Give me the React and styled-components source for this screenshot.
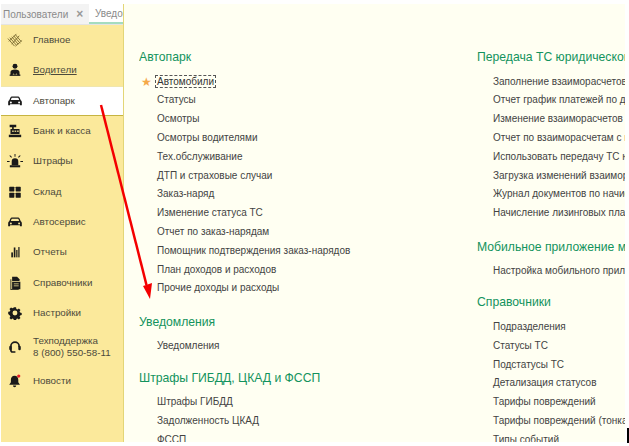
import React from "react";
import styled, { createGlobalStyle } from "styled-components";

const Global = createGlobalStyle`
  html, body { margin: 0; padding: 0; background: #fff; }
  body { font-family: "Liberation Sans", Arial, sans-serif; }
`;

const Page = styled.div`
  position: relative;
  width: 629px;
  height: 446px;
  overflow: hidden;
  background: #fff;
`;
const Frame = styled.div`
  display: flex;
  width: 624px;
  height: 438px;
  margin: 4px 0 0 1px;
  overflow: hidden;
`;
const Left = styled.aside`
  display: flex;
  flex-direction: column;
  box-sizing: border-box;
  flex: 0 0 123px;
  width: 123px;
  min-width: 0;
  overflow: hidden;
  border-right: 1px solid #e3d677;
  background: #fbe99b;
`;
const Tabs = styled.div`
  display: flex;
  box-sizing: border-box;
  height: 21px;
  overflow: hidden;
  background: #fff;
  border-bottom: 1px solid #e4e4e4;
  flex: none;
`;
const Tab = styled.div`
  display: flex;
  align-items: center;
  flex: none;
  box-sizing: border-box;
  font-size: 10px;
  white-space: nowrap;
  color: #8a8a8a;
  background: ${p => (p.$active ? "#fff" : "#f3f3f3")};
  width: ${p => (p.$active ? "40px" : "88px")};
  padding-left: ${p => (p.$active ? "6px" : "2px")};
  height: 20px;
  border-bottom: ${p => (p.$active ? "2px solid #a4dcc0" : "none")};
`;
const Close = styled.span`
  margin-left: 8px;
  font-size: 12px;
  font-weight: 700;
  color: #999;
`;
const Nav = styled.nav`
  display: flex;
  flex-direction: column;
`;
const NavRow = styled.div`
  display: flex;
  align-items: center;
  box-sizing: border-box;
  height: ${p => (p.$tall ? "37.4px" : "30.3px")};
  gap: 10px;
  padding-left: 5px;
  font-size: 9.8px;
  line-height: 12px;
  color: #4c4a3c;
  text-decoration: ${p => (p.$link ? "underline" : "none")};
  background: ${p => (p.$active ? "#fff" : "transparent")};
  border-bottom: ${p => (p.$active ? "1px solid #c6b441" : "none")};
  border-top: ${p => (p.$active ? "1px solid #f0e6ae" : "none")};
`;
const IconBox = styled.span`
  display: flex;
  flex: 0 0 17px;
  width: 17px;
  height: 17px;
  align-items: center;
  justify-content: center;
  svg { display: block; }
`;
const Content = styled.main`
  flex: 1;
  display: flex;
  min-width: 0;
  overflow: hidden;
  background: #fffff2;
  padding: 43px 0 0 15px;
`;
const Column = styled.div`
  flex: 0 0 ${p => p.$width}px;
  min-width: 0;
  overflow: hidden;
`;
const Section = styled.section`
  margin-bottom: ${p => (p.$compact ? "11.4px" : "13.6px")};
`;
const Heading = styled.h2`
  margin: 0 0 5.6px;
  height: 20px;
  line-height: 20px;
  font-size: 12.2px;
  font-weight: 400;
  white-space: nowrap;
  color: #13935d;
`;
const Item = styled.div`
  position: relative;
  height: 18.8px;
  line-height: 18.8px;
  padding-left: ${p => p.$indent}px;
  font-size: 10px;
  white-space: nowrap;
  color: #434343;
`;
const Focused = styled.span`
  outline: 1px dashed #555;
  padding: 0 1px;
  margin-left: -1px;
  color: #333;
`;
const Star = styled.span`
  position: absolute;
  left: 2px;
  top: 0;
  color: #f5a94a;
  font-size: 12px;
`;
const Overlay = styled.svg`
  position: absolute;
  left: 0;
  top: 0;
  pointer-events: none;
`;
const Notch = styled.div`
  position: absolute;
  left: 627px;
  top: 428px;
  width: 2px;
  height: 15px;
  background: #000;
`;

const I = ({ children, size = 14 }) => (
  <svg width={size} height={size} viewBox="0 0 17 17" fill="#1a1a1a">{children}</svg>
);

const icons = {
  home: (
    <I size={16}>
      <g stroke="#7d6d32" strokeWidth="1" fill="none">
        <path d="M1 7l7 8M3 6l7 8M5 5l7 8M7 4l7 8M9 3l6 7M2 10l8-8M5 13l8-9M9 15l7-6" />
      </g>
    </I>
  ),
  driver: (
    <I>
      <circle cx="8.500" cy="4" r="3" />
      <path d="M3 15v-3.500C3 9 5 8 8.500 8s5.500 1 5.500 3.500V15h-2.500a3 3 0 0 0-6 0z" />
      <circle cx="8.500" cy="12.500" r="1.700" />
      <rect x="2" y="14" width="13" height="1.600" />
    </I>
  ),
  car: (
    <I>
      <path fillRule="evenodd" d="M4.700 3h7.600c.8 0 1.400.4 1.700 1.100L15.500 7.600c.8.500 1.300 1.200 1.300 2.100v4.100h-2.300v-1.300h-12v1.300H.200V9.700c0-.9.500-1.600 1.300-2.100L3 4.100C3.300 3.400 3.900 3 4.700 3zM4.500 4.600 3.400 7.400h10.200l-1.100-2.800zM3.500 9a1.200 1.200 0 1 0 0 2.400 1.200 1.200 0 0 0 0-2.400zm10 0a1.200 1.200 0 1 0 0 2.400 1.200 1.200 0 0 0 0-2.400z" />
    </I>
  ),
  bank: (
    <I>
      <path d="M2 1h8v3H7v2h7v6H3V6h2V4H2z" />
      <rect x="1" y="13" width="15" height="3" />
      <rect x="5" y="8" width="2" height="1.500" fill="#fbe99b" />
      <rect x="8" y="8" width="2" height="1.500" fill="#fbe99b" />
      <rect x="11" y="8" width="2" height="1.500" fill="#fbe99b" />
    </I>
  ),
  fines: (
    <I size={16}>
      <path d="M5 13V9a3.500 3.500 0 0 1 7 0v4z" />
      <rect x="3" y="13" width="11" height="2.200" />
      <path d="M8 1h1v3H8zM2.500 3l.8-.7 2 2-.8.7zM14.500 3l-.8-.7-2 2 .8.7zM0 8.500h2.800v1H0zM14.200 8.500H17v1h-2.800z" />
    </I>
  ),
  stock: (
    <I>
      <rect x="1.500" y="2" width="6.200" height="6" rx=".6" />
      <rect x="9.300" y="2" width="6.200" height="6" rx=".6" />
      <rect x="1.500" y="9.500" width="6.200" height="6" rx=".6" />
      <rect x="9.300" y="9.500" width="6.200" height="6" rx=".6" />
    </I>
  ),
  reports: (
    <I>
      <rect x="4" y="9" width="2" height="6" />
      <rect x="7" y="3" width="2" height="12" />
      <rect x="10" y="6" width="1.500" height="9" />
      <rect x="12.500" y="2.500" width="1.500" height="12.500" />
    </I>
  ),
  refs: (
    <I>
      <path d="M5 1h6l3 3v2H5z" />
      <path fillRule="evenodd" d="M3 4h1v12h9v1H3z" />
      <path fillRule="evenodd" d="M5 7h10v9H5zM7 9v1h6V9zm0 2.500v1h6v-1z" />
    </I>
  ),
  settings: (
    <I>
      <path fillRule="evenodd" d="M7 .8h3l.4 2.200 1.500.7 1.900-1.200 2.100 2.100-1.200 1.900.7 1.500 2.200.4v3l-2.200.4-.7 1.500 1.200 1.900-2.100 2.100-1.900-1.200-1.500.7-.4 2.200H7l-.4-2.200-1.500-.7-1.900 1.200-2.100-2.100 1.200-1.900-.7-1.500L-.6 10V7l2.200-.4.7-1.500L1.100 3.200l2.100-2.100 1.900 1.200 1.500-.7zM8.500 5.200a3.300 3.300 0 1 0 0 6.600 3.300 3.300 0 0 0 0-6.600z" transform="translate(.8 .8) scale(.9)" />
    </I>
  ),
  support: (
    <I>
      <path d="M8.500 1.500a6 6 0 0 1 6 6v1h-2v-1a4 4 0 0 0-8 0v4.500c0 1 .6 1.800 1.500 1.800H9v1.800H5.500C3.500 15.600 2.500 14 2.500 12V7.500a6 6 0 0 1 6-6z" />
      <rect x="1.500" y="7" width="3" height="5.500" rx="1.500" />
      <rect x="12.500" y="7" width="3" height="5.500" rx="1.500" />
    </I>
  ),
  news: (
    <I>
      <path d="M8 2c3 0 4.500 2.200 4.500 5v3l2 3H1.500l2-3V7C3.500 4.200 5 2 8 2z" />
      <path d="M6 14h4a2 2 0 0 1-4 0z" />
      <circle cx="13" cy="2.500" r="2" fill="#e8202a" />
    </I>
  ),
};

const nav = [
  { icon: "home", label: "Главное" },
  { icon: "driver", label: "Водители", link: true },
  { icon: "car", label: "Автопарк", active: true },
  { icon: "bank", label: "Банк и касса" },
  { icon: "fines", label: "Штрафы" },
  { icon: "stock", label: "Склад" },
  { icon: "car", label: "Автосервис" },
  { icon: "reports", label: "Отчеты" },
  { icon: "refs", label: "Справочники" },
  { icon: "settings", label: "Настройки" },
  { icon: "support", label: <>Техподдержка<br />8 (800) 550-58-11</>, tall: true },
  { icon: "news", label: "Новости" },
];

const leftCol = [
  {
    title: "Автопарк",
    items: ["Автомобили", "Статусы", "Осмотры", "Осмотры водителями", "Тех.обслуживание", "ДТП и страховые случаи", "Заказ-наряд", "Изменение статуса ТС", "Отчет по заказ-нарядам", "Помощник подтверждения заказ-нарядов", "План доходов и расходов", "Прочие доходы и расходы"],
  },
  { title: "Уведомления", items: ["Уведомления"] },
  { title: "Штрафы ГИБДД, ЦКАД и ФССП", items: ["Штрафы ГИБДД", "Задолженность ЦКАД", "ФССП"] },
];
const rightCol = [
  {
    title: "Передача ТС юридическому лицу",
    items: ["Заполнение взаиморасчетов", "Отчет график платежей по договорам", "Изменение взаиморасчетов", "Отчет по взаиморасчетам с контрагентами", "Использовать передачу ТС юрлицу", "Загрузка изменений взаиморасчетов", "Журнал документов по начислениям", "Начисление лизинговых платежей"],
  },
  { title: "Мобильное приложение механика", items: ["Настройка мобильного приложения"] },
  {
    title: "Справочники",
    items: ["Подразделения", "Статусы ТС", "Подстатусы ТС", "Детализация статусов", "Тарифы повреждений", "Тарифы повреждений (тонкая)", "Типы событий"],
  },
];

function Sections({ data, indent }) {
  return data.map(s => (
    <Section key={s.title} $compact={s.items.length === 1}>
      <Heading>{s.title}</Heading>
      {s.items.map(t => (
        <Item key={t} $indent={indent}>
          {t === "Автомобили" ? (
            <>
              <Star>★</Star>
              <Focused>{t}</Focused>
            </>
          ) : t}
        </Item>
      ))}
    </Section>
  ));
}

export default function App() {
  return (
    <Page>
      <Global />
      <Frame>
        <Left>
          <Tabs>
            <Tab>Пользователи<Close>×</Close></Tab>
            <Tab $active>Уведомления</Tab>
          </Tabs>
          <Nav>
            {nav.map((n, i) => (
              <NavRow key={i} $active={n.active} $link={n.link} $tall={n.tall}>
                <IconBox>{icons[n.icon]}</IconBox>
                <span>{n.label}</span>
              </NavRow>
            ))}
          </Nav>
        </Left>
        <Content>
          <Column $width={338}><Sections data={leftCol} indent={18} /></Column>
          <Column $width={148}><Sections data={rightCol} indent={16} /></Column>
        </Content>
      </Frame>
      <Notch />
      <Overlay width="629" height="446" viewBox="0 0 629 446">
        <path d="M101 105L146.500 285" stroke="#f40000" strokeWidth="2.500" fill="none" />
        <path d="M143 286L152 283L150 299z" fill="#f40000" />
      </Overlay>
    </Page>
  );
}
